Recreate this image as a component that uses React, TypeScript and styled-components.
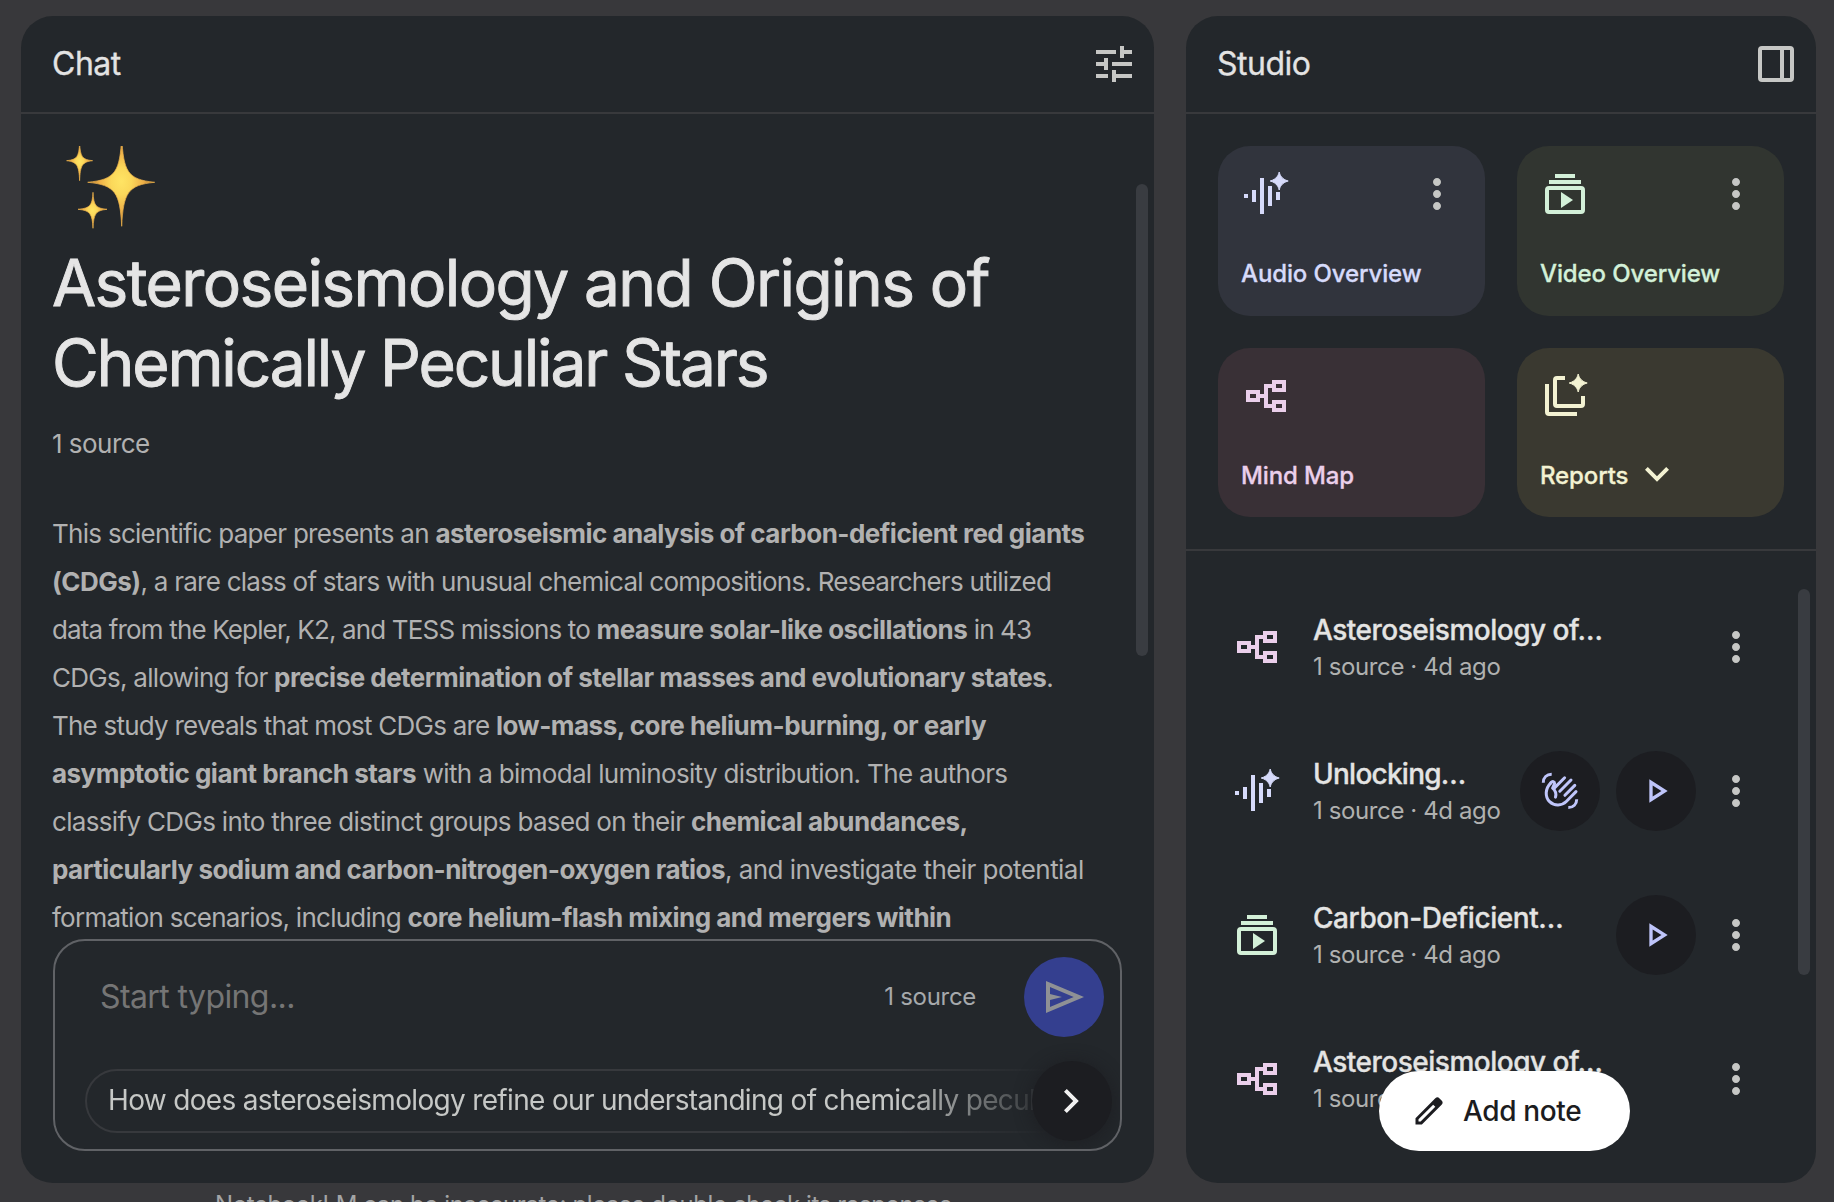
import React, { ReactNode } from "react";
import styled, { createGlobalStyle } from "styled-components";
import { MdTune, MdMoreVert, MdOutlinePlayArrow } from "react-icons/md";

type IconProps = { size?: number };

const STAR =
  "M18.6 1C19 2.5 19.8 4.6 23.1 5.5C19.8 6.4 19 8.5 18.6 10C18.2 8.5 17.4 6.4 14.1 5.5C17.4 4.6 18.2 2.5 18.6 1z";

function Icon({ size = 48, children }: IconProps & { children: ReactNode }) {
  return (
    <svg width={size} height={size} viewBox="0 0 24 24" fill="currentColor">
      {children}
    </svg>
  );
}

const StarMark = () => (
  <path d={STAR} stroke="currentColor" strokeWidth="0.5" />
);

const AudioIcon = () => (
  <Icon>
    <path d="M1 12h2v2H1zM5 10h2v6H5zM9 4h2v18H9zM13 8h2v10h-2zM17 11h2v4h-2z" />
    <StarMark />
  </Icon>
);

const VideoIcon = () => (
  <Icon>
    <path d="M7 2h10v2H7zM4 5h16v2H4z" />
    <path
      fillRule="evenodd"
      d="M4 8h16a2 2 0 0 1 2 2v10a2 2 0 0 1-2 2H4a2 2 0 0 1-2-2V10a2 2 0 0 1 2-2zm0 2v10h16V10z"
    />
    <path d="M10 11v8l6-4z" />
  </Icon>
);

const MindMapIcon = () => (
  <Icon>
    <path
      fillRule="evenodd"
      d="M2 9h7v2h2V6h4V4h7v6h-7V8h-2v8h2v-2h7v6h-7v-2h-4v-5H9v2H2zm2 2v2h3v-2zm13-5v2h3V6zm0 10v2h3v-2z"
    />
  </Icon>
);

const ReportIcon = () => (
  <Icon>
    <path d="M4 6v14h14v2H4a2 2 0 0 1-2-2V6z" />
    <path d="M12 2v2H8v12h12v-4h2v4a2 2 0 0 1-2 2H8a2 2 0 0 1-2-2V4a2 2 0 0 1 2-2z" />
    <StarMark />
  </Icon>
);

const PanelIcon = () => (
  <Icon>
    <path
      fillRule="evenodd"
      d="M5 3h14a2 2 0 0 1 2 2v14a2 2 0 0 1-2 2H5a2 2 0 0 1-2-2V5a2 2 0 0 1 2-2zm0 2v14h9V5zm11 0v14h3V5z"
    />
  </Icon>
);

const SendIcon = () => (
  <Icon>
    <path
      fillRule="evenodd"
      d="M3 20V4l19 8zm2-3l11.85-5L5 7v3.5l6 1.5-6 1.5z"
    />
  </Icon>
);

const ChevronIcon = () => (
  <Icon>
    <path d="M9.4 18L8 16.6l4.6-4.6L8 7.4 9.4 6l6 6z" />
  </Icon>
);

const ChevronDownIcon = () => (
  <Icon>
    <path d="M12 15.4l-6-6L7.4 8l4.6 4.6L16.6 8 18 9.4z" />
  </Icon>
);

const PencilIcon = () => (
  <Icon size={36}>
    <path
      fillRule="evenodd"
      d="M5 19h1.425L16.2 9.225 14.775 7.8 5 17.575zm-2 2v-4.25L16.2 3.575a2 2 0 0 1 2.825.025L20.4 5a2 2 0 0 1 0 2.8L7.25 21z"
    />
  </Icon>
);

const HandIcon = () => (
  <svg
    width="40"
    height="40"
    viewBox="0 0 40 40"
    fill="none"
    stroke="currentColor"
    strokeWidth="3"
    strokeLinejoin="round"
  >
    <path d="M3.3 11.7c0-5 3.4-8.4 8.4-8.4M28.3 36.6c5 0 8.4-3.4 8.4-8.4" />
    <path
      strokeLinecap="round"
      d="M10.9 11.8C5 17.5 4.8 26 9.6 30.6s12.2 4.3 16.7-.1l9.7-9.9"
    />
    <path
      strokeLinecap="round"
      d="M24.6 6.8l-9.8 9.8M31 9L19.8 20.2M34.8 14.4l-9.9 9.9"
    />
    <path
      strokeLinecap="round"
      d="M10.9 11.8c1.6-1.9 3.6-1.4 3.7.8l-2 4.5c3 2.5 3.9 5.4 2.9 9"
    />
  </svg>
);

// four-pointed star, drawn round its own centre
const star = (l: number, r: number, t: number, b: number) =>
  `M0 ${-t}C${0.05 * r} ${-0.23 * t} ${0.18 * r} ${-0.06 * t} ${r} 0` +
  `C${0.18 * r} ${0.06 * b} ${0.05 * r} ${0.25 * b} 0 ${b}` +
  `C${-0.05 * l} ${0.25 * b} ${-0.18 * l} ${0.06 * b} ${-l} 0` +
  `C${-0.18 * l} ${-0.06 * t} ${-0.05 * l} ${-0.23 * t} 0 ${-t}z`;

const Sparkles = () => (
  <svg width="108" height="97" viewBox="-1 0 108 97">
    <defs>
      <radialGradient id="gold">
        <stop offset="0" stopColor="#ffe464" />
        <stop offset="0.3" stopColor="#fbd85a" />
        <stop offset="0.65" stopColor="#eeb048" />
        <stop offset="1" stopColor="#a8702c" />
      </radialGradient>
    </defs>
    <g fill="url(#gold)" stroke="#f0b54c" strokeWidth="0.7">
      <path transform="translate(68.7 36.3)" d={star(34, 33, 46, 44)} />
      <path transform="translate(26.6 14.7)" d={star(13, 13, 18, 20)} />
      <path transform="translate(40 63.3)" d={star(15, 14, 17, 19)} />
    </g>
  </svg>
);

const tools = [
  { label: "Audio Overview", icon: <AudioIcon />, bg: "#31343d", color: "#d6dafa", menu: true },
  { label: "Video Overview", icon: <VideoIcon />, bg: "#313530", color: "#d3f0d8", menu: true },
  { label: "Mind Map", icon: <MindMapIcon />, bg: "#393036", color: "#ebcfeb" },
  { label: "Reports", icon: <ReportIcon />, bg: "#3a3930", color: "#f3f2d2", arrow: true },
];

const artifacts = [
  { title: "Asteroseismology of…", icon: <MindMapIcon />, color: "#ebcfeb", ls: -0.5 },
  { title: "Unlocking…", icon: <AudioIcon />, color: "#d6dafa", ls: -0.75, hand: true, play: true },
  { title: "Carbon-Deficient…", icon: <VideoIcon />, color: "#d3f0d8", ls: -0.43, play: true },
  { title: "Asteroseismology of…", icon: <MindMapIcon />, color: "#ebcfeb", ls: -0.5 },
];

function App() {
  return (
    <Page>
      <GlobalStyle />
      <ChatColumn>
        <Panel>
          <PanelHeader>
            <PanelTitle>Chat</PanelTitle>
            <MdTune size={48} />
          </PanelHeader>
          <ChatBody>
            <Sparkles />
            <Title>
              <Line $ls={-1.58}>Asteroseismology and Origins of</Line>
              <Line $ls={-2.16}>Chemically Peculiar Stars</Line>
            </Title>
            <SourceCount>1 source</SourceCount>
            <Summary>
              <Line $ls={-0.72}>
                This scientific paper presents an{" "}
                <b>asteroseismic analysis of carbon-deficient red giants</b>
              </Line>
              <Line $ls={-0.76}>
                <b>(CDGs)</b>, a rare class of stars with unusual chemical
                compositions. Researchers utilized
              </Line>
              <Line $ls={-0.85}>
                data from the Kepler, K2, and TESS missions to{" "}
                <b>measure solar-like oscillations</b> in 43
              </Line>
              <Line $ls={-0.72}>
                CDGs, allowing for{" "}
                <b>precise determination of stellar masses and evolutionary states</b>.
              </Line>
              <Line $ls={-0.77}>
                The study reveals that most CDGs are{" "}
                <b>low-mass, core helium-burning, or early</b>
              </Line>
              <Line $ls={-0.66}>
                <b>asymptotic giant branch stars</b> with a bimodal luminosity
                distribution. The authors
              </Line>
              <Line $ls={-0.67}>
                classify CDGs into three distinct groups based on their{" "}
                <b>chemical abundances,</b>
              </Line>
              <Line $ls={-0.55}>
                <b>particularly sodium and carbon-nitrogen-oxygen ratios</b>, and
                investigate their potential
              </Line>
              <Line $ls={-0.74}>
                formation scenarios, including{" "}
                <b>core helium-flash mixing and mergers within</b>
              </Line>
            </Summary>
            <Scrollbar $top={70} $height={472} />
          </ChatBody>
          <Composer>
            <ComposerRow>
              <Placeholder>Start typing...</Placeholder>
              <ComposerCount>1 source</ComposerCount>
              <SendButton>
                <SendIcon />
              </SendButton>
            </ComposerRow>
            <Suggestions>
              <Suggestion>
                How does asteroseismology refine our understanding of chemically
                peculiar stars?
              </Suggestion>
            </Suggestions>
            <NextButton>
              <ChevronIcon />
            </NextButton>
          </Composer>
        </Panel>
        <Disclaimer>
          NotebookLM can be inaccurate; please double check its responses.
        </Disclaimer>
      </ChatColumn>

      <StudioPanel>
        <PanelHeader>
          <PanelTitle>Studio</PanelTitle>
          <PanelIcon />
        </PanelHeader>
        <ToolGrid>
          {tools.map((tool) => (
            <ToolCard key={tool.label} $bg={tool.bg} $color={tool.color}>
              <ToolTop>
                {tool.icon}
                {tool.menu && <MenuDots size={48} />}
              </ToolTop>
              <ToolLabel>
                {tool.label}
                {tool.arrow && <ChevronDownIcon />}
              </ToolLabel>
            </ToolCard>
          ))}
        </ToolGrid>
        <ArtifactList>
          {artifacts.map((item, i) => (
            <Artifact key={i}>
              <ArtifactIcon $color={item.color}>{item.icon}</ArtifactIcon>
              <ArtifactText>
                <ArtifactTitle $ls={item.ls}>{item.title}</ArtifactTitle>
                <ArtifactMeta>1 source · 4d ago</ArtifactMeta>
              </ArtifactText>
              {item.hand && (
                <RoundButton>
                  <HandIcon />
                </RoundButton>
              )}
              {item.play && (
                <RoundButton>
                  <MdOutlinePlayArrow size={40} />
                </RoundButton>
              )}
              <MenuDots size={48} />
            </Artifact>
          ))}
          <Scrollbar $top={38} $height={386} />
        </ArtifactList>
        <AddNote>
          <PencilIcon />
          Add note
        </AddNote>
      </StudioPanel>
    </Page>
  );
}

export default App;

const GlobalStyle = createGlobalStyle`
  * {
    box-sizing: border-box;
  }
  body {
    margin: 0;
    background: #38383b;
    font-family: Inter, Roboto, sans-serif;
  }
  svg {
    display: block;
    flex-shrink: 0;
  }
`;

const Page = styled.div`
  display: flex;
  gap: 32px;
  width: 1834px;
  height: 1202px;
  padding: 16px 18px 0 21px;
  overflow: hidden;
  white-space: nowrap;
`;

const ChatColumn = styled.div`
  display: flex;
  flex-direction: column;
  width: 1133px;
`;

const Panel = styled.section`
  position: relative;
  display: flex;
  flex-direction: column;
  flex-shrink: 0;
  height: 1167px;
  border-radius: 32px;
  background: #23272b;
  overflow: hidden;
`;

const StudioPanel = styled(Panel)`
  width: 630px;
`;

const PanelHeader = styled.header`
  display: flex;
  align-items: center;
  justify-content: space-between;
  flex-shrink: 0;
  height: 98px;
  padding: 0 16px 0 31px;
  border-bottom: 2px solid #38393c;
  color: #c6c7c5;
`;

const PanelTitle = styled.h1`
  margin: 0;
  font-size: 32px;
  font-weight: 400;
  line-height: 48px;
  letter-spacing: -0.5px;
  color: #e3e3e3;
  -webkit-text-stroke: 0.3px currentColor;
`;

const ChatBody = styled.div`
  position: relative;
  height: 825px;
  padding: 32px 31px 0;
  overflow: hidden;
`;

const Title = styled.h2`
  margin: 0;
  font-size: 64px;
  font-weight: 400;
  line-height: 80px;
  color: #e5e5e5;
  -webkit-text-stroke: 0.9px currentColor;
`;

const Line = styled.span<{ $ls: number }>`
  display: block;
  letter-spacing: ${({ $ls }) => $ls}px;
`;

const SourceCount = styled.div`
  margin-top: 25px;
  font-size: 26px;
  line-height: 32px;
  letter-spacing: -0.54px;
  color: #b1b1b1;
`;

const Summary = styled.p`
  margin: 50px 0 0;
  font-size: 26px;
  line-height: 48px;
  color: #b1b1b1;

  b {
    font-weight: 700;
    letter-spacing: -0.52px;
  }
`;

const Scrollbar = styled.div<{ $top: number; $height: number }>`
  position: absolute;
  top: ${({ $top }) => $top}px;
  right: 6px;
  width: 12px;
  height: ${({ $height }) => $height}px;
  border-radius: 6px;
  background: #393c41;
`;

const Composer = styled.div`
  position: relative;
  height: 212px;
  margin: 0 32px;
  padding: 16px 16px 0 30px;
  border: 2px solid #606266;
  border-radius: 32px;
  overflow: hidden;
`;

const ComposerRow = styled.div`
  display: flex;
  align-items: center;
  height: 80px;
  padding-left: 15px;
`;

const Placeholder = styled.span`
  flex: 1;
  padding-bottom: 1px;
  font-size: 32px;
  letter-spacing: -0.6px;
  color: #757575;
`;

const ComposerCount = styled.span`
  margin-right: 48px;
  padding-bottom: 1px;
  font-size: 24px;
  letter-spacing: -0.3px;
  color: #a6a9ac;
`;

const SendButton = styled.div`
  display: grid;
  place-items: center;
  width: 80px;
  height: 80px;
  border-radius: 50%;
  background: #343f8f;
  color: #8f9195;
`;

const Suggestions = styled.div`
  margin-top: 32px;
  overflow: hidden;
  mask-image: linear-gradient(to right, #000 815px, transparent 970px);
`;

const Suggestion = styled.div`
  width: 1300px;
  height: 64px;
  padding-left: 21px;
  border: 2px solid #37393d;
  border-radius: 32px;
  font-size: 28px;
  line-height: 59px;
  letter-spacing: -0.67px;
  color: #c6c8c6;
`;

const NextButton = styled.div`
  position: absolute;
  right: 8px;
  top: 120px;
  display: grid;
  place-items: center;
  width: 80px;
  height: 80px;
  border-radius: 50%;
  background: #1c1d21;
  box-shadow: 0 2px 14px 4px rgba(28, 28, 32, 0.5);
  color: #f0f0f0;
`;

const Disclaimer = styled.div`
  margin-top: 6px;
  padding-right: 2px;
  text-align: center;
  font-size: 24px;
  line-height: 32px;
  letter-spacing: -0.41px;
  color: #a4a5a6;
`;

const ToolGrid = styled.div`
  display: grid;
  grid-template-columns: 1fr 1fr;
  grid-auto-rows: 169.5px;
  gap: 32px;
  padding: 32px;
  border-bottom: 2px solid #38393c;
`;

const ToolCard = styled.div<{ $bg: string; $color: string }>`
  display: flex;
  flex-direction: column;
  justify-content: space-between;
  padding: 24px 24px 24px 23px;
  border-radius: 32px;
  background: ${({ $bg }) => $bg};
  color: ${({ $color }) => $color};
`;

const ToolTop = styled.div`
  display: flex;
  justify-content: space-between;
  padding-left: 0.5px;
`;

const ToolLabel = styled.div`
  display: flex;
  align-items: center;
  gap: 5px;
  height: 36px;
  font-size: 24px;
  font-weight: 500;
  letter-spacing: -0.12px;
  -webkit-text-stroke: 0.3px currentColor;
`;

const MenuDots = styled(MdMoreVert)`
  color: #c6c7c5;
`;

const ArtifactList = styled.div`
  position: relative;
  flex: 1;
  padding: 24px 56px 0 47px;
  overflow: hidden;
`;

const Artifact = styled.div`
  display: flex;
  align-items: center;
  gap: 16px;
  height: 144px;
`;

const ArtifactIcon = styled.div<{ $color: string }>`
  color: ${({ $color }) => $color};
`;

const ArtifactText = styled.div`
  flex: 1;
  padding: 3px 0 0 16px;
`;

const ArtifactTitle = styled.div<{ $ls: number }>`
  font-size: 28px;
  font-weight: 500;
  line-height: 36px;
  letter-spacing: ${({ $ls }) => $ls}px;
  color: #e4e4e3;
  -webkit-text-stroke: 0.3px currentColor;
`;

const ArtifactMeta = styled.div`
  font-size: 24px;
  line-height: 37px;
  letter-spacing: -0.39px;
  color: #b0b1b0;
`;

const RoundButton = styled.div`
  display: grid;
  place-items: center;
  width: 80px;
  height: 80px;
  border-radius: 50%;
  background: #1c1d21;
  color: #bfc5fa;
`;

const AddNote = styled.div`
  position: absolute;
  left: 193px;
  bottom: 32px;
  display: flex;
  align-items: center;
  gap: 16px;
  width: 251px;
  height: 80px;
  padding-left: 32px;
  border-radius: 40px;
  background: #fff;
  color: #1c1c20;
  font-size: 28px;
  font-weight: 500;
  letter-spacing: -0.35px;
`;
